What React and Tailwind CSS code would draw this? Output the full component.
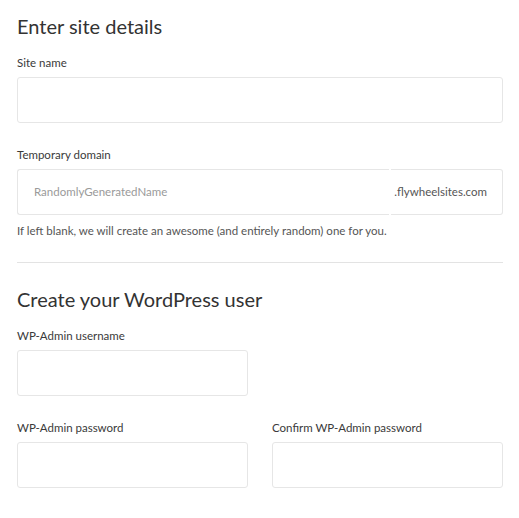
// Enter site details — create-site form

const font = { fontFamily: "Lato, 'Open Sans', 'Noto Sans', sans-serif" };

function Label({ children }) {
  return <div className="text-[11.5px] leading-[15px] text-[#3a3a3a] mb-[7px]">{children}</div>;
}

function Box({ className = "" }) {
  return <div className={`h-[46px] border border-[#e6e6e6] rounded-[3px] bg-white ${className}`} />;
}

export default function App() {
  return (
    <div className="bg-white min-h-[518px] pl-[17px] pr-[16px] pt-[12px]" style={font}>
      <h1 className="text-[20px] leading-[28px] text-[#333] mb-[15px]">Enter site details</h1>

      <Label>Site name</Label>
      <Box />

      <div className="mt-[24px]">
        <Label>Temporary domain</Label>
        <div className="flex h-[46px]">
          <div className="flex-1 flex items-center border-y border-l border-[#e6e6e6] rounded-l-[3px] pl-[16px] text-[11.5px] text-[#9a9a9a]">
            RandomlyGeneratedName
          </div>
          <div className="ml-[2px] flex items-center border-y border-r border-[#e6e6e6] rounded-r-[3px] pl-[3px] pr-[15px] text-[11.5px] text-[#555]">
            .flywheelsites.com
          </div>
        </div>
        <p className="mt-[8px] text-[11.5px] leading-[15px] text-[#555]">
          If left blank, we will create an awesome (and entirely random) one for you.
        </p>
      </div>

      <hr className="mt-[24px] border-0 border-t border-[#e3e3e3]" />

      <h2 className="mt-[22px] text-[20px] leading-[28px] text-[#333] mb-[15px]">Create your WordPress user</h2>

      <div className="grid grid-cols-[231px_1fr] gap-x-[24px]">
        <div>
          <Label>WP-Admin username</Label>
          <Box />
        </div>
        <div />
        <div className="mt-[24px]">
          <Label>WP-Admin password</Label>
          <Box />
        </div>
        <div className="mt-[24px]">
          <Label>Confirm WP-Admin password</Label>
          <Box />
        </div>
      </div>
    </div>
  );
}
